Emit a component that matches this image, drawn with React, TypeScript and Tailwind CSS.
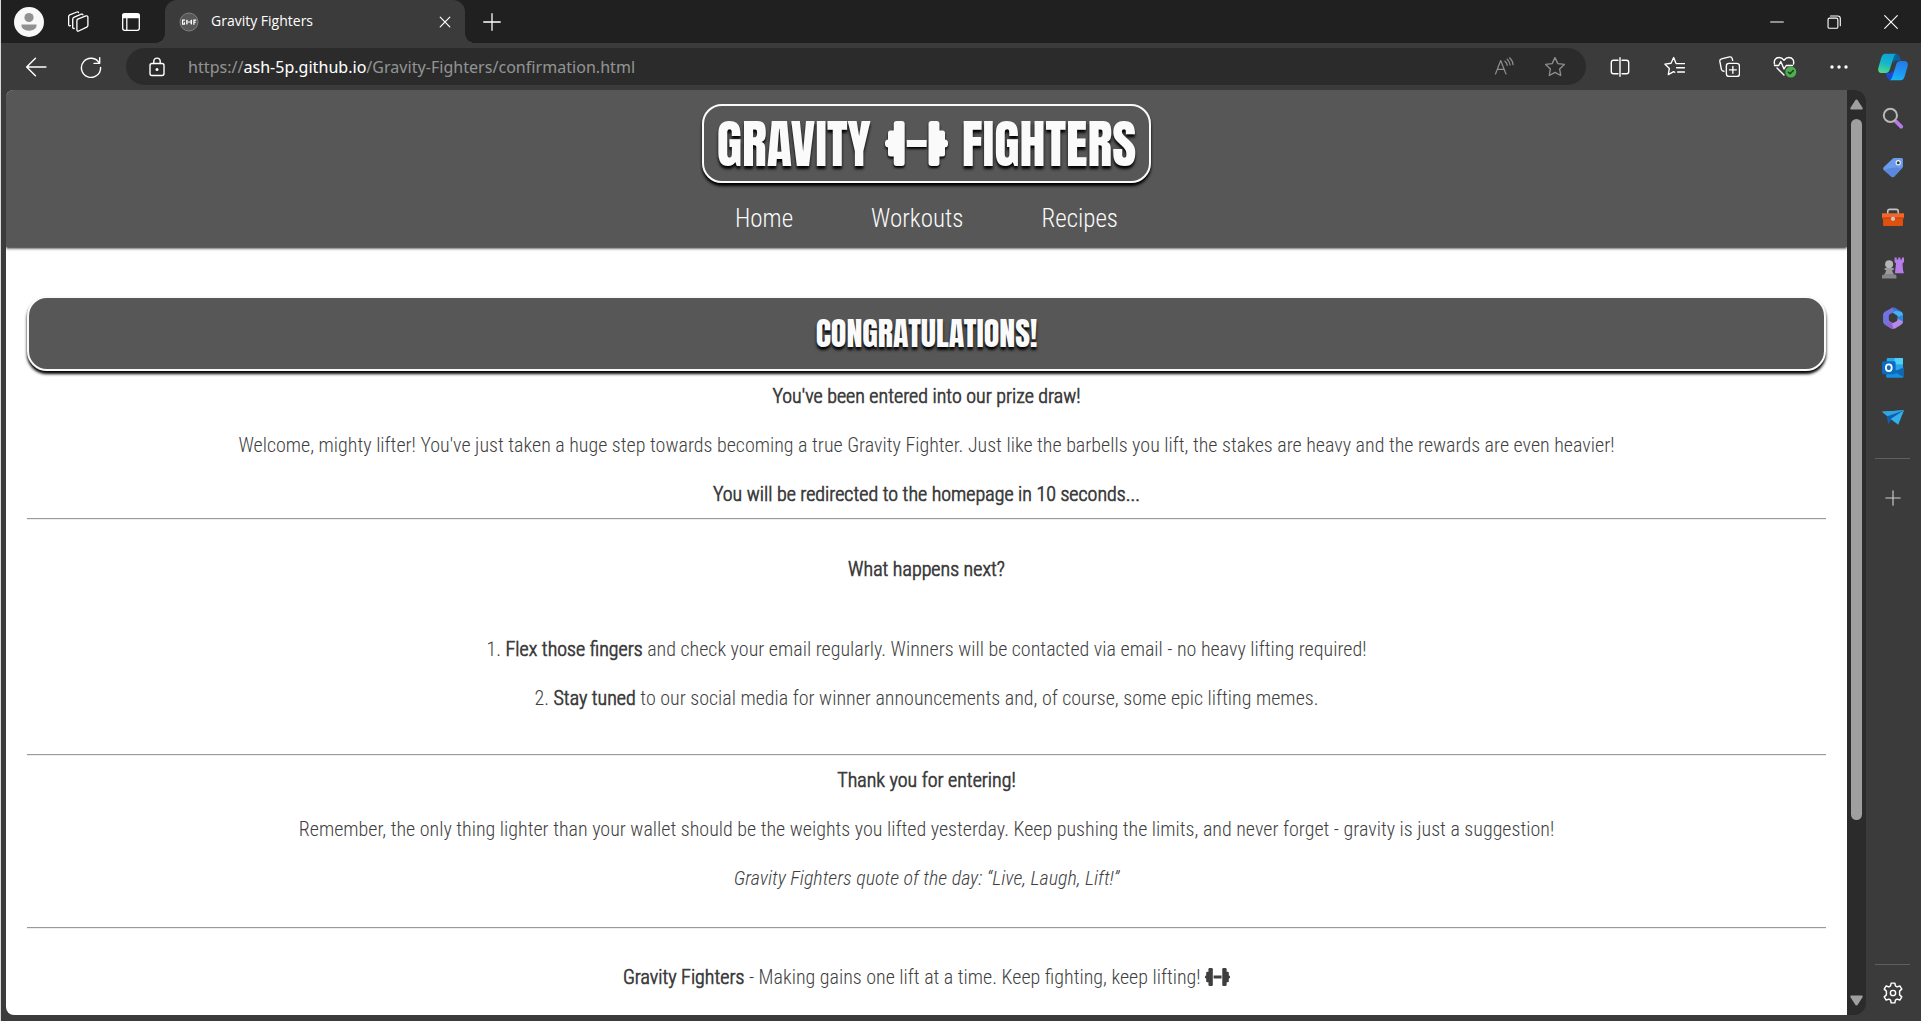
import { useState, type ReactNode } from "react";

const PAGE_URL = "https://ash-5p.github.io/Gravity-Fighters/confirmation.html";

const body = "font-['Roboto_Condensed',sans-serif] font-light";
const strong = "font-['Roboto_Condensed_Light','Roboto_Condensed',sans-serif] font-bold";

function Stroke({ children, size = 20, color = "#fff", width = 1.3 }: { children: ReactNode; size?: number; color?: string; width?: number }) {
  return (
    <svg width={size} height={size} viewBox="0 0 20 20" fill="none" stroke={color} strokeWidth={width} strokeLinecap="round" strokeLinejoin="round" aria-hidden="true">
      {children}
    </svg>
  );
}

function IconButton({ label, className, children }: { label: string; className: string; children: ReactNode }) {
  return (
    <button type="button" aria-label={label} className={`flex shrink-0 items-center justify-center ${className}`}>
      {children}
    </button>
  );
}

function Barbell({ className }: { className: string }) {
  return (
    <svg viewBox="0 0 63 45" fill="currentColor" className={className} aria-hidden="true">
      <rect x="8.7" y="0" width="11" height="45" rx="3" />
      <rect x="3" y="9.5" width="10" height="26" rx="2.5" />
      <rect x="0" y="18.5" width="8" height="8" rx="3.5" />
      <rect x="21.7" y="19" width="20" height="7" rx="0.6" />
      <rect x="43.5" y="0" width="11" height="45" rx="3" />
      <rect x="50" y="9.5" width="10" height="26" rx="2.5" />
      <rect x="55" y="18.5" width="8" height="8" rx="3.5" />
    </svg>
  );
}

function Favicon() {
  return (
    <svg width="20" height="20" viewBox="0 0 20 20" aria-hidden="true">
      <circle cx="10" cy="10" r="9" fill="#575757" stroke="#8c8c8c" strokeWidth="0.8" />
      <g fill="#fff">
        <path d="M3 7.5h3v1.2H4.2v2.8h.8v-1.2h1v2.4H3zM14.3 7.5h2.9v1.2h-1.7v1h1.3v1.1h-1.3v1.9h-1.2z" />
        <rect x="7.2" y="7.8" width="1.4" height="4.6" />
        <rect x="8.6" y="9.5" width="3" height="1" />
        <rect x="11.6" y="7.8" width="1.4" height="4.6" />
      </g>
    </svg>
  );
}

function TitleBar() {
  return (
    <div className="flex h-[43px] shrink-0 bg-[#202020] pr-0.5">
      <IconButton label="Profile" className="w-[55px]">
        <svg width="30" height="30" viewBox="0 0 30 30" aria-hidden="true">
          <circle cx="15" cy="15" r="15" fill="#f8f8f8" />
          <circle cx="15" cy="10.5" r="4.6" fill="#919191" />
          <path d="M7.5 17.500h15c.4 4-3 6.200-7.500 6.200s-7.900-2.200-7.500-6.200z" fill="#919191" />
        </svg>
      </IconButton>
      <IconButton label="Workspaces" className="w-[44px]">
        <Stroke size={22} width={1.2}>
          <path d="M9.200 7.700l8-3.200c1-.4 1.800.1 1.800 1.100v7.400c0 .8-.3 1.300-1 1.600l-7.400 3.600c-1 .4-1.600-.1-1.600-1.100V8.900c0-.6.1-.9.6-1.200z" />
          <path d="M6.600 15.800c-.9.3-1.400-.2-1.400-1.100V7.200c0-.7.300-1.200 1-1.500l6.800-2.800c.7-.3 1.300-.1 1.500.6" />
          <path d="M3.100 13.400c-.9.300-1.600-.1-1.600-1V5c0-.7.300-1.200 1-1.500L9 .9c.7-.3 1.300-.1 1.500.5" />
        </Stroke>
      </IconButton>
      <IconButton label="Tab actions menu" className="mr-[3px] w-[62px]">
        <Stroke>
          <rect x="1.700" y="1.700" width="16.600" height="16.600" rx="2" />
          <path d="M2 2.300h16v3.400H2z" fill="#fff" />
          <path d="M5.800 6v12" />
        </Stroke>
      </IconButton>
      <div className="relative flex w-[300px] items-center rounded-t-xl bg-[#3b3b3b] pl-[14px] pr-2 before:absolute before:bottom-0 before:-left-2.5 before:size-2.5 before:bg-[radial-gradient(circle_at_0_0,transparent_10px,#3b3b3b_10px)] after:absolute after:bottom-0 after:-right-2.5 after:size-2.5 after:bg-[radial-gradient(circle_at_100%_0,transparent_10px,#3b3b3b_10px)]">
        <Favicon />
        <span className="mb-0.5 ml-3 flex-1 font-['Open_Sans',sans-serif] text-[14px] leading-5 text-white">Gravity Fighters</span>
        <IconButton label="Close tab" className="size-6">
          <Stroke size={16} width={1.5}>
            <path d="M4 4l12 12M16 4L4 16" />
          </Stroke>
        </IconButton>
      </div>
      <IconButton label="New tab" className="w-[53px]">
        <Stroke size={18} width={1.4}>
          <path d="M10 .8v18.400M.8 10h18.400" />
        </Stroke>
      </IconButton>
      <div className="flex-1" />
      <IconButton label="Minimize" className="w-[57px]">
        <Stroke size={14} width={1.6}>
          <path d="M1 10h18" />
        </Stroke>
      </IconButton>
      <IconButton label="Restore" className="w-[57px]">
        <Stroke size={14} width={1.600}>
          <rect x="1.500" y="4.500" width="14" height="14.500" rx="2" />
          <path d="M5 1.400h10.500c2 0 3.500 1.500 3.500 3.500v10.500" />
        </Stroke>
      </IconButton>
      <IconButton label="Close window" className="w-[57px]">
        <Stroke size={14} width={1.600}>
          <path d="M1 1l18 18M19 1L1 19" />
        </Stroke>
      </IconButton>
    </div>
  );
}

const STAR = "M10 1.500l2.600 5.400 5.900.8-4.300 4.100 1 5.900L10 14.900l-5.200 2.800 1-5.900L1.500 7.700l5.900-.8z";

function AddressBar() {
  const [editing, setEditing] = useState(false);
  return (
    <div className="flex h-[37px] flex-1 items-center rounded-full bg-[#2b2b2b] pr-[5px]">
      <IconButton label="View site information" className="w-[62px]">
        <Stroke width={1.4}>
          <rect x="3" y="6.500" width="14" height="12" rx="2" />
          <path d="M6.800 6.500V4.300a3.200 3.200 0 0 1 6.400 0v2.200" />
          <circle cx="10" cy="12.500" r="0.800" fill="#fff" />
        </Stroke>
      </IconButton>
      <div className="relative flex h-full flex-1 items-center font-['Noto_Sans_Display','Noto_Sans',sans-serif] text-[17px]">
        {!editing && (
          <span className="whitespace-nowrap text-[#929292]">
            https://<span className="text-white">ash-5p.github.io</span>/Gravity-Fighters/confirmation.html
          </span>
        )}
        <input
          aria-label="Address and search bar"
          className="absolute inset-0 w-full bg-transparent text-white outline-none"
          value={editing ? PAGE_URL : ""}
          readOnly
          onFocus={() => setEditing(true)}
          onBlur={() => setEditing(false)}
        />
      </div>
      <IconButton label="Read aloud" className="w-[50px]">
        <Stroke size={20} color="#8f8f8f" width={1.200}>
          <path d="M1.500 17L6.700 3.500 12 17M3.300 12.300h6.800" />
          <path d="M11 4.200c1.300 1.200 2 2.600 2.300 4.300M13.200 2.200c1.700 1.500 2.700 3.400 3 5.800M15.500.8c2.100 1.700 3.300 4 3.600 6.900" />
        </Stroke>
      </IconButton>
      <IconButton label="Add to favorites" className="w-[52px]">
        <Stroke size={22} color="#8f8f8f" width={1.200}>
          <path d={STAR} />
        </Stroke>
      </IconButton>
    </div>
  );
}

function Copilot() {
  return (
    <svg width="30" height="28" viewBox="0 0 30 28" aria-hidden="true">
      <defs>
        <linearGradient id="cpLeft" x1="0.600" y1="0" x2="0.300" y2="1">
          <stop offset="0" stopColor="#0aa3da" />
          <stop offset="0.500" stopColor="#16b5c9" />
          <stop offset="1" stopColor="#52d98b" />
        </linearGradient>
        <linearGradient id="cpRight" x1="0.600" y1="0" x2="0.400" y2="1">
          <stop offset="0" stopColor="#2379e6" />
          <stop offset="0.600" stopColor="#1f97f5" />
          <stop offset="1" stopColor="#14b9f0" />
        </linearGradient>
      </defs>
      <path d="M14 1h4c2.500 0 3.300 1.500 4 3.500l1 3.200h-4c-2 0-3 1-3.600 3z" fill="#0b5f9c" />
      <path d="M16 27h-3c-2.400 0-3.600-1.400-4.200-3.400L7.600 20h3.600c2.500 0 3.400-1.200 4-3.200z" fill="#1549d8" />
      <path d="M7.500.700h11c-1.600.5-2.300 2-2.900 3.900l-3.800 12c-.7 2.300-1.800 3.500-4.300 3.500H3.400C.8 20-.3 18 .3 15L3.200 5C4 2.200 5.200.7 7.500.7z" fill="url(#cpLeft)" />
      <path d="M22.500 27.300h-11c1.600-.5 2.300-2 2.900-3.900l3.800-12c.7-2.300 1.800-3.500 4.300-3.500h4.100c2.600 0 3.700 2 3.100 5L26.800 23c-.8 2.800-2 4.300-4.300 4.300z" fill="url(#cpRight)" />
    </svg>
  );
}

function Toolbar() {
  return (
    <div className="flex h-[47px] shrink-0 items-center bg-[#3b3b3b] pr-0.5 pl-[7px]">
      <IconButton label="Back" className="w-[55px]">
        <Stroke size={22} width={1.300}>
          <path d="M19 10H1.500M9.500 2L1.500 10l8 8" />
        </Stroke>
      </IconButton>
      <IconButton label="Refresh" className="mr-2 w-[55px]">
        <Stroke size={22} width={1.300}>
          <path d="M17.600 6.500A8.700 8.700 0 1 0 18.700 10.500M17.900 1.500v5.200h-5.200" />
        </Stroke>
      </IconButton>
      <AddressBar />
      <div className="ml-1.5 flex">
        <IconButton label="Split screen" className="w-[55px]">
          <Stroke width={1.400}>
            <path d="M8 3.200H3.500c-1.200 0-2.200 1-2.200 2.200v9.200c0 1.200 1 2.200 2.200 2.200H8M12 3.200h4.500c1.200 0 2.200 1 2.200 2.200v9.200c0 1.200-1 2.200-2.200 2.200H12M10 .8v18.400" />
          </Stroke>
        </IconButton>
        <IconButton label="Favorites" className="w-[55px]">
          <Stroke size={21} width={1.300}>
            <path d="M11.500 7.200L9.200 1.500 6.700 6.900.8 7.700l4.300 4.100-1 5.900 5.100-2.800 1 .6M12.500 7.200h7M12 11.200h7.500M13 15.200h6.500" />
          </Stroke>
        </IconButton>
        <IconButton label="Collections" className="w-[55px]">
          <Stroke size={21} width={1.300}>
            <rect x="7" y="7" width="12.500" height="12.500" rx="2.500" />
            <path d="M13.200 10v6.500M10 13.200h6.500M4.800 14.500c-1.500.1-2.200-.6-2.500-1.800L.8 5.200c-.2-1.200.4-2.200 1.600-2.500L10 .9c1.300-.3 2.300.4 2.600 1.600l.4 1.700" />
          </Stroke>
        </IconButton>
        <IconButton label="Browser essentials" className="w-[55px]">
          <svg width="24" height="22" viewBox="0 0 24 22" fill="none" stroke="#fff" strokeWidth="1.400" strokeLinecap="round" strokeLinejoin="round" aria-hidden="true">
            <path d="M1.500 8C.7 4.500 2.500 1.500 6 1.500c2.200 0 3.700 1 5 2.700 1.300-1.700 2.800-2.700 5-2.700 3.500 0 5.300 3 4.500 6.500M4 12l7 7" />
            <path d="M1.500 9.500h4.200l2.100-4 3.200 7.500 2.200-3.500h6.300" />
            <circle cx="17.800" cy="16" r="5.500" fill="#4caf50" stroke="none" />
            <path d="M15.300 16.200l1.800 1.600 3.200-3.400" stroke="#1d3b1e" />
          </svg>
        </IconButton>
        <IconButton label="Settings and more" className="w-[54px]">
          <svg width="18" height="4" viewBox="0 0 18 4" fill="#fff" aria-hidden="true">
            <circle cx="2" cy="2" r="1.700" />
            <circle cx="9" cy="2" r="1.700" />
            <circle cx="16" cy="2" r="1.700" />
          </svg>
        </IconButton>
        <IconButton label="Copilot" className="w-[53px]">
          <Copilot />
        </IconButton>
      </div>
    </div>
  );
}

const sidebarApps: { label: string; art: ReactNode }[] = [
  {
    label: "Search",
    art: (
      <>
        <path d="M13.500 14l4.800 4.800" stroke="#b57be8" strokeWidth="3.600" strokeLinecap="round" />
        <circle cx="8" cy="8" r="6.300" fill="none" stroke="#b9b9b9" strokeWidth="1.900" />
      </>
    ),
  },
  {
    label: "Shopping",
    art: (
      <>
        <path d="M11.500 1h7c1 0 1.500.5 1.500 1.500v6.200c0 .7-.2 1.200-.7 1.700l-7.600 8.200c-.9 1-2 1-2.900.1L1.700 12.400c-.9-.9-.8-1.900.1-2.800L10 1.700c.4-.5.900-.7 1.500-.7z" fill="#6a9bec" />
        <path d="M1.700 12.400l7.100 6.300c.9.900 2 .9 2.900-.1l7.600-8.200c-5-1-12-.5-17.600 2z" fill="#5b87dc" />
        <circle cx="15.500" cy="5.500" r="2" fill="#3b3b3b" stroke="#e9eef8" strokeWidth="1.100" />
      </>
    ),
  },
  {
    label: "Tools",
    art: (
      <>
        <path d="M5.500 7V4.200c0-1.200.7-1.900 1.900-1.900h6.200c1.200 0 1.900.7 1.900 1.900V7" fill="none" stroke="#c4c4c4" strokeWidth="1.500" />
        <path d="M0 6h21v5H0z" fill="#f2662a" />
        <path d="M1 10.500h19v6.700c0 .6-.4 1-1 1H2c-.6 0-1-.4-1-1z" fill="#e2500f" />
        <path d="M0 10h21v1H0z" fill="#b93c08" />
        <circle cx="10.500" cy="11.300" r="2" fill="#c9c9c9" />
      </>
    ),
  },
  {
    label: "Games",
    art: (
      <>
        <path d="M12 .5h2v1.800h1.500V.5h2v1.800H19V.5h2v4.300l-1.400 1.400.5 6.800.9 2.500h-8.600l.2-2.500.8-6.800L12 4.800z" fill="#b97deb" />
        <circle cx="6.800" cy="7" r="3.800" fill="#b5b5b5" />
        <path d="M2.500 10.500h8.700v2H9.700c.2 2.200.9 3.400 2.400 4.500H1.600c1.500-1.100 2.100-2.300 2.300-4.500H2.500z" fill="#9b9b9b" />
        <path d="M.5 17h12.700c.6.8.8 1.700.5 3.500H0C-.2 18.700 0 17.800.5 17z" fill="#868686" />
      </>
    ),
  },
  {
    label: "Microsoft 365",
    art: (
      <>
        <path d="M10.500.2L3.200 4.200C1.700 5 1 6.200 1 7.700v6c0 1.400.6 2.600 2 3.300l4.500-3.200c-.8-.4-1-1-1-1.800V8.800c0-1 .4-1.700 1.200-2.200L12 4z" fill="#6f74e2" />
        <path d="M10.500.2c.7 0 1.300.2 2 .5L18 4c1.400.9 2 2 2 3.700L15.500 9 10 5.300c1.500-1 2-3 .5-5.100z" fill="#3d72d8" />
        <path d="M7.500 6.700L13 3.500l5.800 1.200c.8.800 1.200 1.800 1.200 3v6l-5-2.200V9.300c0-.7-.3-1.200-.9-1.600L10.500 5.500z" fill="#45b3ee" />
        <path d="M20 7.700v6c0 .8-.2 1.500-.5 2.100L15 12.600V9.300z" fill="#2f86e0" />
        <path d="M3 17l5.500 3.200c1.500.9 3 .9 4.400 0l5-3c1.300-.8 2-1.900 2.100-3.400l-5-2.600c0 1.200-.5 2-1.500 2.600l-2 1.100c-.8.500-1.500.5-2.400 0L7.200 13.500z" fill="#b48ae8" />
        <path d="M3 17l5.500 3.200c.8.400 1.600.7 2.400.7l-1.500-6L7.200 13.500z" fill="#8f62d4" />
      </>
    ),
  },
  {
    label: "Outlook",
    art: (
      <>
        <rect x="4.500" y="1" width="15.500" height="12" rx="1" fill="#28a8ea" />
        <path d="M12 1h8v6h-8z" fill="#50d0f8" />
        <path d="M4 10l8 4.500 8.500-4.500v8.500c0 .8-.5 1.300-1.300 1.300H5.300C4.500 19.800 4 19.300 4 18.500z" fill="#1490df" />
        <path d="M20.500 19l-9-5 9-4z" fill="#1066b5" />
        <rect x="0" y="4" width="13" height="12.500" rx="1.500" fill="#0a6ac4" />
        <ellipse cx="6.500" cy="10.200" rx="2.800" ry="3.200" fill="none" stroke="#fff" strokeWidth="1.700" />
      </>
    ),
  },
  {
    label: "Drop",
    art: (
      <>
        <path d="M0 4.500L21 3 9 11.500z" fill="#4fc3f1" />
        <path d="M0 4.500l21-1.500L5.500 9z" fill="#2fa5e2" />
        <path d="M4.500 9L21 3 8.500 12.500 6 16.500z" fill="#0f5fae" />
        <path d="M21 3l-5.500 14-7.300-5.500z" fill="#30b1ee" />
      </>
    ),
  },
];

function Sidebar() {
  return (
    <aside className="flex w-[55px] shrink-0 flex-col items-center pt-[3px] pr-0.5">
      {sidebarApps.map((app) => (
        <IconButton key={app.label} label={app.label} className="h-[50px] w-full">
          <svg width="22" height="22" viewBox="0 0 21 21" aria-hidden="true">
            {app.art}
          </svg>
        </IconButton>
      ))}
      <div className="mt-[15px] h-px w-[35px] bg-[#5f5f5f]" />
      <IconButton label="Customize" className="mt-4 h-[46px] w-full">
        <Stroke size={16} color="#d0d0d0" width={1.400}>
          <path d="M10 1v18M1 10h18" />
        </Stroke>
      </IconButton>
      <div className="flex-1" />
      <div className="h-px w-[35px] bg-[#5f5f5f]" />
      <IconButton label="Sidebar settings" className="h-[56px] w-full">
        <Stroke size={22} width={1.300}>
          <path d="M8.300 1h3.400l.5 2.600 1.500.9 2.500-.9 1.800 2.900-2 1.800v3.400l2 1.800-1.800 2.900-2.500-.9-1.500.9-.5 2.600H8.300l-.5-2.600-1.500-.9-2.500.9L2 13.500l2-1.800V8.300L2 6.500l1.800-2.900 2.500.9 1.500-.9z" />
          <circle cx="10" cy="10" r="2.400" />
        </Stroke>
      </IconButton>
    </aside>
  );
}

function Scrollbar() {
  return (
    <div className="flex w-[19px] shrink-0 flex-col items-center rounded-r-xl bg-[#2b2b2b] py-[9px]">
      <svg width="13" height="11" viewBox="0 0 13 11" fill="#9f9f9f" aria-hidden="true">
        <path d="M5.300 1.200a1.400 1.400 0 0 1 2.400 0l4.800 7.600c.5.900 0 1.700-1 1.700h-10c-1 0-1.500-.8-1-1.700z" />
      </svg>
      <div className="mt-[9px] min-h-0 w-[11px] flex-[4] rounded-full bg-[#9f9f9f]" />
      <div className="flex-1" />
      <svg width="13" height="11" viewBox="0 0 13 11" fill="#9f9f9f" aria-hidden="true">
        <path d="M5.300 9.800a1.400 1.400 0 0 0 2.400 0l4.800-7.600c.5-.9 0-1.700-1-1.700h-10c-1 0-1.500.8-1 1.700z" />
      </svg>
    </div>
  );
}

function Rule() {
  return <hr className="h-[2px] border-0 border-t border-[#9a9a9a] bg-[#eeeeee]" />;
}

function SiteHeader() {
  return (
    <header className="relative flex h-[157px] flex-col items-center bg-[#575757] pt-[14px] shadow-[0_1px_3px_#000]">
      <h1 className="flex h-[79px] items-center gap-[14px] rounded-[20px] border-2 border-[#fafafa] px-[13px] font-['Anton',sans-serif] text-[52px] font-normal text-[#fafafa] shadow-[0_3px_3px_#000] [text-shadow:0_3px_3px_#000]">
        <span>GRAVITY</span>
        <Barbell className="h-[45px] w-[63px] drop-shadow-[0_2px_1px_#000]" />
        <span>FIGHTERS</span>
      </h1>
      <nav className={`mt-[21px] flex gap-[78px] text-[25px] leading-[30px] text-[#fafafa] ${body}`}>
        <a href="#home">Home</a>
        <a href="#workouts">Workouts</a>
        <a href="#recipes">Recipes</a>
      </nav>
    </header>
  );
}

function Confirmation() {
  return (
    <main className={`px-[21px] pt-[49px] text-center text-[20px] leading-[29px] text-[#3f3f3f] ${body}`}>
      <h2 className="flex h-[75px] items-center justify-center rounded-[20px] border-2 border-[#fafafa] bg-[#575757] font-['Anton',sans-serif] text-[32px] font-normal text-[#fafafa] shadow-[0_3px_3px_#000] [text-shadow:0_3px_3px_#000]">
        CONGRATULATIONS!
      </h2>
      <section className="flex flex-col gap-5 pt-[11px] pb-[9px]">
        <p className={strong}>You've been entered into our prize draw!</p>
        <p>Welcome, mighty lifter! You've just taken a huge step towards becoming a true Gravity Fighter. Just like the barbells you lift, the stakes are heavy and the rewards are even heavier!</p>
        <p className={strong}>You will be redirected to the homepage in 10 seconds...</p>
      </section>
      <Rule />
      <section className="pt-[35px] pb-[41px]">
        <p className={strong}>What happens next?</p>
        <ol className="mt-[51px] flex list-inside list-decimal flex-col gap-5">
          <li>
            <strong className={strong}>Flex those fingers</strong> and check your email regularly. Winners will be contacted via email - no heavy lifting required!
          </li>
          <li>
            <strong className={strong}>Stay tuned</strong> to our social media for winner announcements and, of course, some epic lifting memes.
          </li>
        </ol>
      </section>
      <Rule />
      <section className="flex flex-col gap-5 pt-[10px] pb-[34px]">
        <p className={strong}>Thank you for entering!</p>
        <p>Remember, the only thing lighter than your wallet should be the weights you lifted yesterday. Keep pushing the limits, and never forget - gravity is just a suggestion!</p>
        <p className="italic">Gravity Fighters quote of the day: “Live, Laugh, Lift!”</p>
      </section>
      <Rule />
      <p className="pt-[34px]">
        <strong className={strong}>Gravity Fighters</strong> - Making gains one lift at a time. Keep fighting, keep lifting!{" "}
        <Barbell className="inline h-[18px] w-[25px] align-[-2px]" />
      </p>
    </main>
  );
}

export default function App() {
  return (
    <div className="flex h-screen flex-col overflow-hidden border-l border-[#d8d8d8] bg-[#3b3b3b]">
      <TitleBar />
      <Toolbar />
      <div className="flex min-h-0 flex-1">
        <div className="mb-1.5 ml-[5px] flex min-w-0 flex-1">
          <div className="min-w-0 flex-1 overflow-hidden rounded-l-lg bg-white">
            <SiteHeader />
            <Confirmation />
          </div>
          <Scrollbar />
        </div>
        <Sidebar />
      </div>
    </div>
  );
}
